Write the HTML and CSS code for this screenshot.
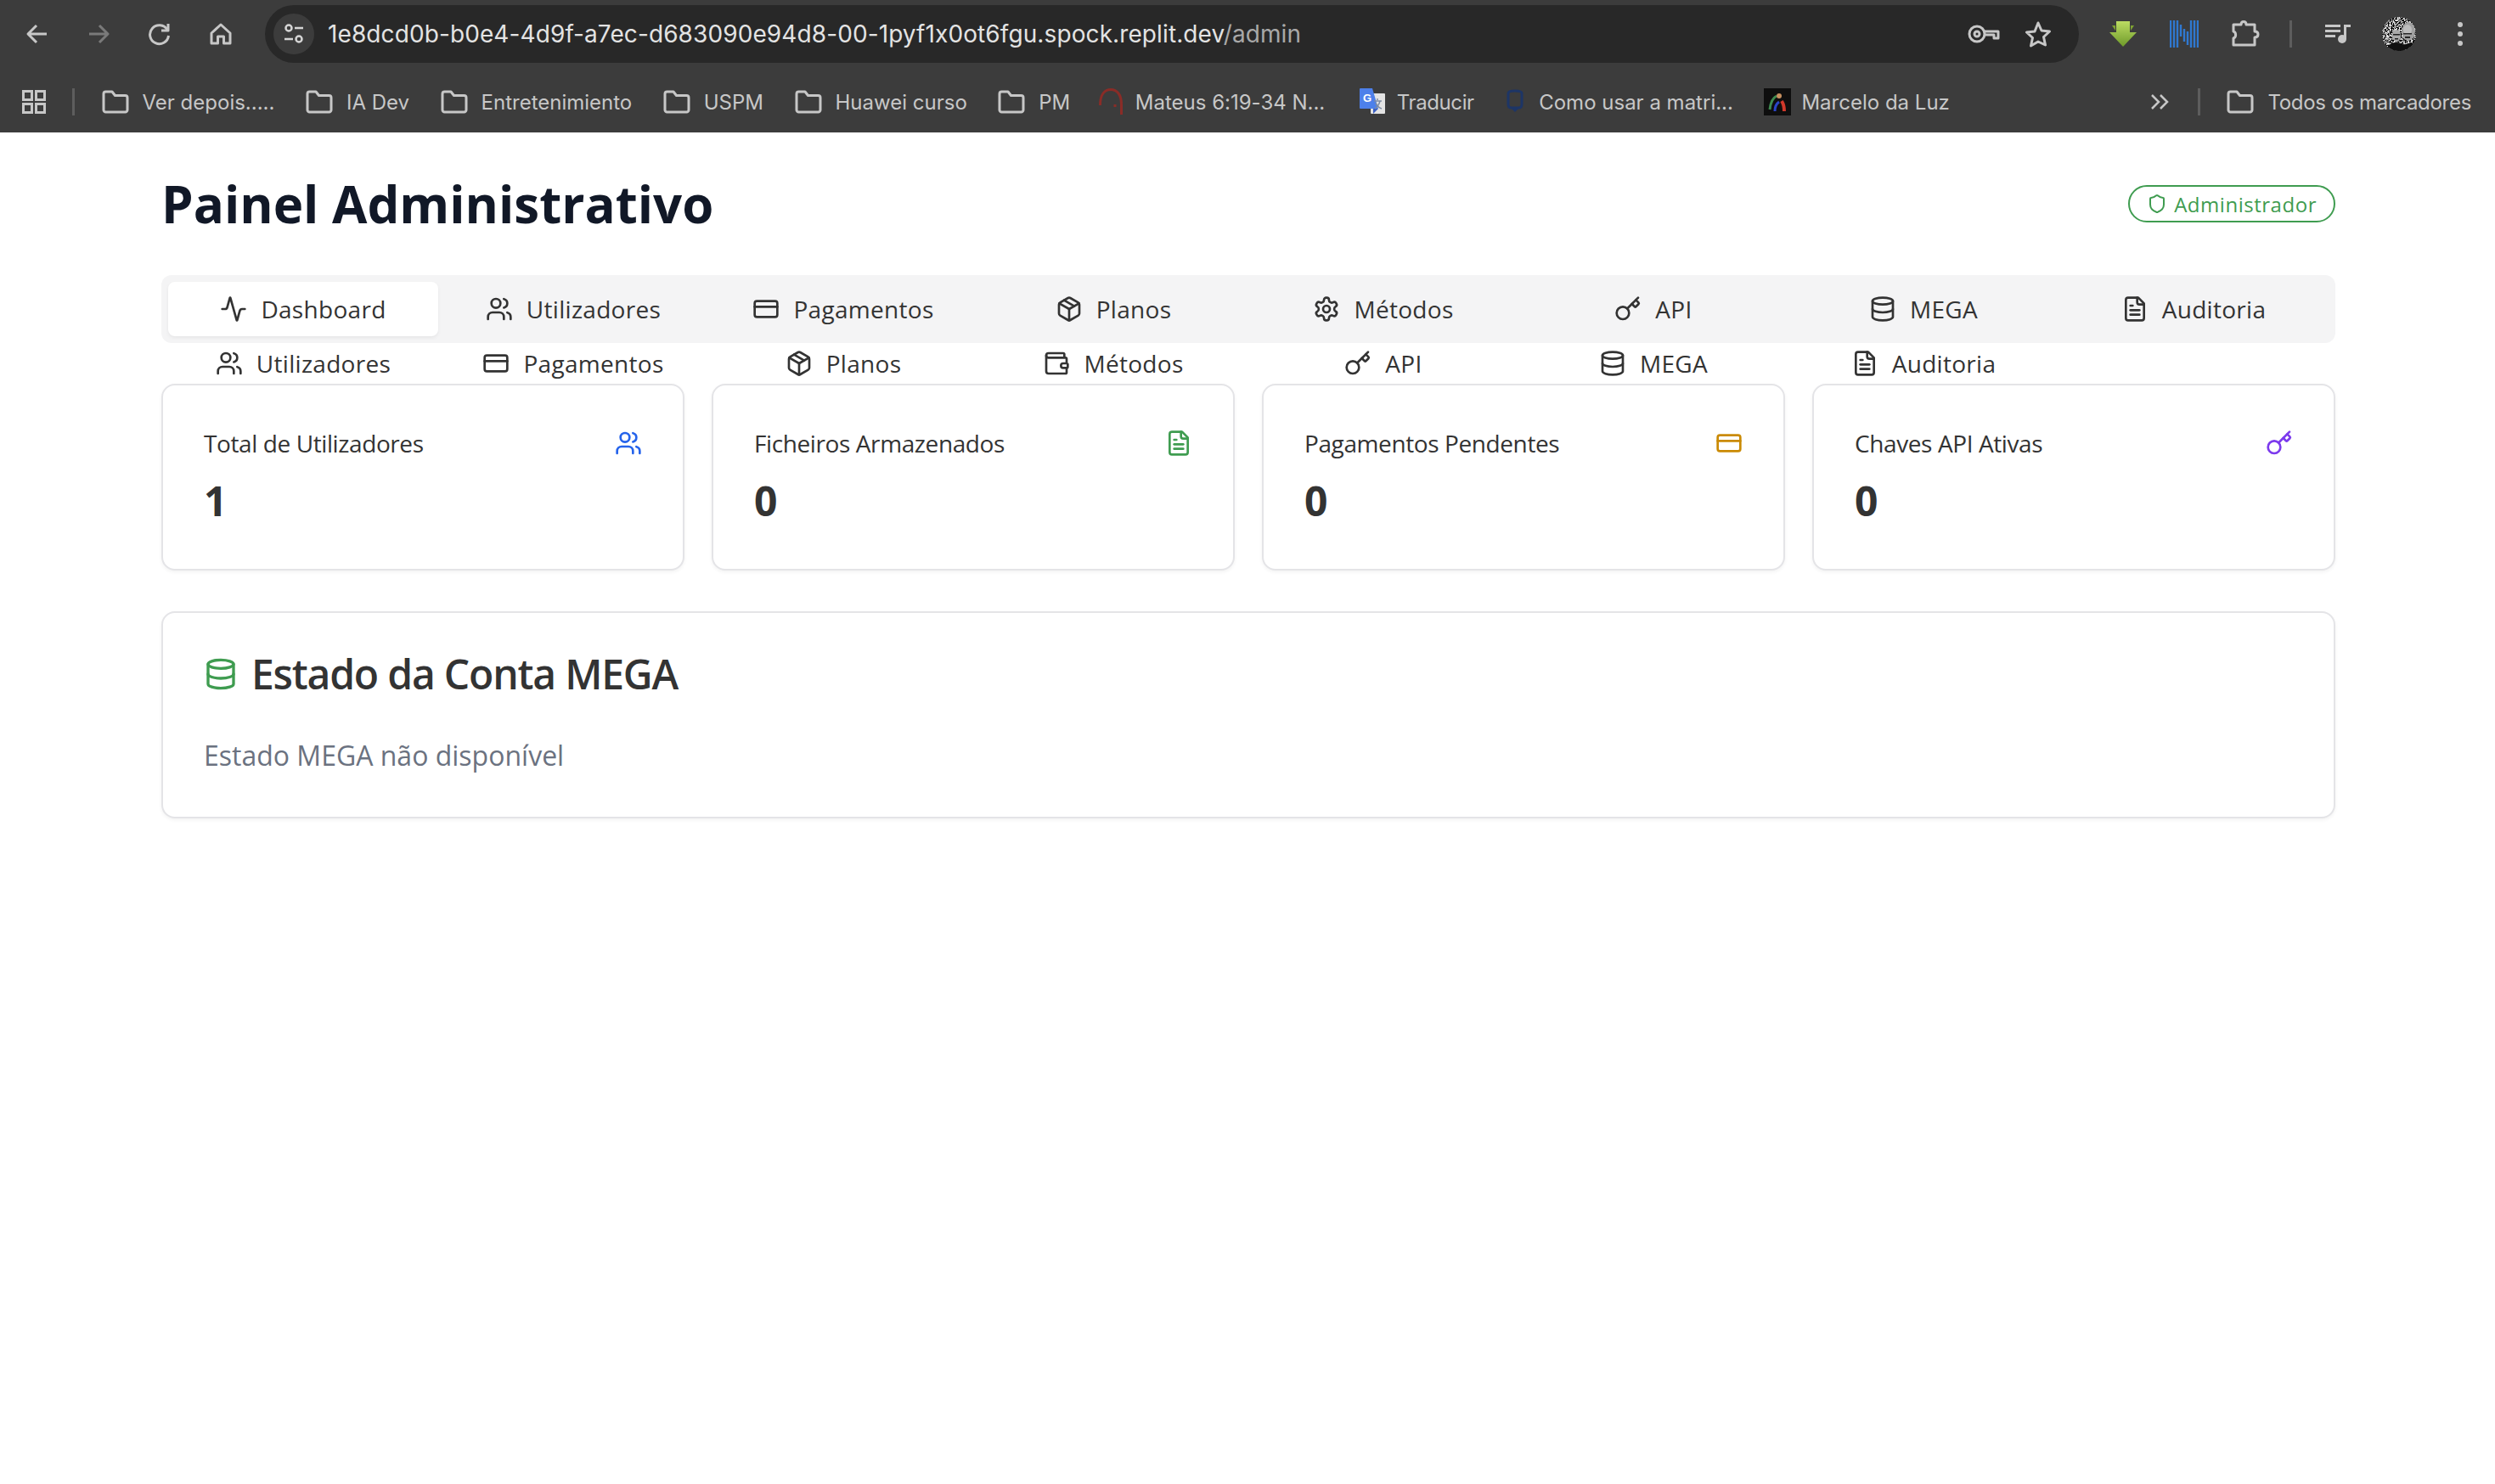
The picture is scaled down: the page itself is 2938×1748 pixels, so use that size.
FILE: index.html
```html
<!DOCTYPE html>
<html lang="pt">
<head>
<meta charset="utf-8">
<title>Painel Administrativo</title>
<link rel="stylesheet" href="styles.css">
</head>
<body>
<svg class="defs" width="0" height="0" aria-hidden="true">
  <defs>
    <linearGradient id="arrow-grad" x1="0" y1="0" x2="0" y2="1"><stop offset="0" stop-color="#bcdc62"/><stop offset="1" stop-color="#6e9a2a"/></linearGradient>
    <filter id="speckle" x="0" y="0" width="100%" height="100%"><feTurbulence type="fractalNoise" baseFrequency=".55" numOctaves="2" seed="7"/><feColorMatrix type="matrix" values="3 3 0 0 -2.750 3 3 0 0 -2.750 3 3 0 0 -2.750 0 0 0 0 1"/></filter>
  </defs>
  <symbol id="i-activity" viewBox="0 0 24 24"><path d="M22 12h-2.48a2 2 0 0 0-1.93 1.46l-2.35 8.36a.25.25 0 0 1-.48 0L9.24 2.18a.25.25 0 0 0-.48 0l-2.35 8.36A2 2 0 0 1 4.49 12H2"/></symbol>
  <symbol id="i-users" viewBox="0 0 24 24"><path d="M16 21v-2a4 4 0 0 0-4-4H6a4 4 0 0 0-4 4v2"/><circle cx="9" cy="7" r="4"/><path d="M22 21v-2a4 4 0 0 0-3-3.87"/><path d="M16 3.13a4 4 0 0 1 0 7.75"/></symbol>
  <symbol id="i-card" viewBox="0 0 24 24"><rect width="20" height="14" x="2" y="5" rx="2"/><line x1="2" x2="22" y1="10" y2="10"/></symbol>
  <symbol id="i-package" viewBox="0 0 24 24"><path d="M11 21.73a2 2 0 0 0 2 0l7-4A2 2 0 0 0 21 16V8a2 2 0 0 0-1-1.73l-7-4a2 2 0 0 0-2 0l-7 4A2 2 0 0 0 3 8v8a2 2 0 0 0 1 1.73z"/><path d="M12 22V12"/><polyline points="3.29 7 12 12 20.71 7"/><path d="m7.5 4.27 9 5.15"/></symbol>
  <symbol id="i-settings" viewBox="0 0 24 24"><path d="M12.22 2h-.44a2 2 0 0 0-2 2v.18a2 2 0 0 1-1 1.73l-.43.25a2 2 0 0 1-2 0l-.15-.08a2 2 0 0 0-2.73.73l-.22.38a2 2 0 0 0 .73 2.73l.15.1a2 2 0 0 1 1 1.72v.51a2 2 0 0 1-1 1.74l-.15.09a2 2 0 0 0-.73 2.73l.22.38a2 2 0 0 0 2.73.73l.15-.08a2 2 0 0 1 2 0l.43.25a2 2 0 0 1 1 1.73V20a2 2 0 0 0 2 2h.44a2 2 0 0 0 2-2v-.18a2 2 0 0 1 1-1.73l.43-.25a2 2 0 0 1 2 0l.15.08a2 2 0 0 0 2.73-.73l.22-.39a2 2 0 0 0-.73-2.73l-.15-.08a2 2 0 0 1-1-1.74v-.5a2 2 0 0 1 1-1.74l.15-.09a2 2 0 0 0 .73-2.73l-.22-.38a2 2 0 0 0-2.73-.73l-.15.08a2 2 0 0 1-2 0l-.43-.25a2 2 0 0 1-1-1.73V4a2 2 0 0 0-2-2z"/><circle cx="12" cy="12" r="3"/></symbol>
  <symbol id="i-key" viewBox="0 0 24 24"><path d="m15.5 7.5 2.3 2.3a1 1 0 0 0 1.4 0l2.1-2.1a1 1 0 0 0 0-1.4L19 4"/><path d="m21 2-9.6 9.6"/><circle cx="7.5" cy="15.5" r="5.5"/></symbol>
  <symbol id="i-db" viewBox="0 0 24 24"><ellipse cx="12" cy="5" rx="9" ry="3"/><path d="M3 5V19A9 3 0 0 0 21 19V5"/><path d="M3 12A9 3 0 0 0 21 12"/></symbol>
  <symbol id="i-file" viewBox="0 0 24 24"><path d="M15 2H6a2 2 0 0 0-2 2v16a2 2 0 0 0 2 2h12a2 2 0 0 0 2-2V7Z"/><path d="M14 2v4a2 2 0 0 0 2 2h4"/><path d="M10 9H8"/><path d="M16 13H8"/><path d="M16 17H8"/></symbol>
  <symbol id="i-wallet" viewBox="0 0 24 24"><path d="M19 7V4a1 1 0 0 0-1-1H5a2 2 0 0 0 0 4h15a1 1 0 0 1 1 1v4h-3a2 2 0 0 0 0 4h3a1 1 0 0 0 1-1v-2a1 1 0 0 0-1-1"/><path d="M3 5v14a2 2 0 0 0 2 2h15a1 1 0 0 0 1-1v-4"/></symbol>
  <symbol id="i-shield" viewBox="0 0 24 24"><path d="M20 13c0 5-3.500 7.500-7.660 8.950a1 1 0 0 1-.67-.01C7.500 20.500 4 18 4 13V6a1 1 0 0 1 1-1c2 0 4.500-1.200 6.240-2.720a1.170 1.170 0 0 1 1.520 0C14.510 3.810 17 5 19 5a1 1 0 0 1 1 1z"/></symbol>
  <symbol id="c-folder" viewBox="0 0 32 28"><path d="M2 4.5A2.5 2.5 0 0 1 4.500 2h7.500l3.500 4.500h12A2.500 2.500 0 0 1 30 9v14.500a2.500 2.500 0 0 1-2.500 2.500h-23A2.500 2.500 0 0 1 2 23.500z"/></symbol>
</svg>

<header class="browser">
  <div class="toolbar">
    <div class="nav">
      <span class="tool"><svg class="cico" width="28" height="28" viewBox="0 0 28 28"><path d="M25 14H4M13 4 3 14l10 10"/></svg></span>
      <span class="tool dim"><svg class="cico" width="28" height="28" viewBox="0 0 28 28"><path d="M3 14h21M15 4l10 10-10 10"/></svg></span>
      <span class="tool"><svg class="cico" width="28" height="28" viewBox="0 0 28 28"><path d="M23 9a11 11 0 1 0 1.500 7"/><path d="M24 2v8h-8"/></svg></span>
      <span class="tool"><svg class="cico" width="28" height="28" viewBox="0 0 28 28"><path d="M3 13 14 3l11 10v12h-7.500v-8h-7v8H3z"/></svg></span>
    </div>
    <div class="omnibox">
      <span class="siteinfo"><svg class="cico thin" width="26" height="26" viewBox="0 0 26 26"><circle cx="7" cy="6" r="3.500"/><path d="M14 6h10M2 19h10"/><circle cx="19" cy="19" r="3.500"/></svg></span>
      <span class="url">1e8dcd0b-b0e4-4d9f-a7ec-d683090e94d8-00-1pyf1x0ot6fgu.spock.replit.dev<span class="path">/admin</span></span>
      <span class="omni-tool"><svg class="cico" width="38" height="24" viewBox="0 0 38 24"><circle cx="11" cy="12" r="9"/><circle cx="11" cy="12" r="3"/><path d="M20 9h16v8h-5v-4h-11"/></svg></span>
      <span class="omni-tool"><svg class="cico" width="32" height="32" viewBox="0 0 32 32"><path d="m16 3 4 9 9.500 1-7 6.500 2 9.500L16 25l-8.500 5 2-9.500-7-6.500 9.500-1z"/></svg></span>
    </div>
    <div class="ext">
      <span class="tool"><svg width="32" height="30" viewBox="0 0 32 30"><path class="arrow-dk" d="M7 5 3 5l4 6zM25 5h4l-4 6z"/><path class="arrow" d="M8 0h16v13h8L16 30 0 13h8z"/></svg></span>
      <span class="tool"><svg class="nlogo" width="34" height="32" viewBox="0 0 34 32"><path d="M1 0v32M5 0v32M9 0v32M13 5v14M17 10v15M21 13v16M25 0v32M29 0v32M33 0v32"/></svg></span>
      <span class="tool"><svg class="cico ext-puzzle" width="34" height="32" viewBox="0 0 34 32"><path d="M3 5h9c0-2.500 1.500-3.500 3-3.500s3 1 3 3.500h10v8c2.500 0 4 1.500 4 3.500s-1.500 3.500-4 3.500v9H3v-8c3.500-1 3.500-7 0-8z"/></svg></span>
      <span class="ext-sep"></span>
      <span class="tool"><svg width="30" height="22" viewBox="0 0 30 22"><path class="music" d="M0 0h18v3H0zM0 6h18v3H0zM0 12h12v3H0zM22 0h8v3h-5v14h-3z"/><circle class="music" cx="20" cy="17" r="5"/></svg></span>
      <span class="tool"><svg width="40" height="40" viewBox="0 0 40 40"><defs><clipPath id="av"><circle cx="20" cy="20" r="20"/></clipPath></defs><g clip-path="url(#av)"><rect width="40" height="40" filter="url(#speckle)"/><ellipse cx="31" cy="17" rx="8" ry="11" fill="#a0a0a0"/><ellipse cx="30" cy="15" rx="5" ry="6" fill="#bdbdbd"/><path fill="#262626" d="M25 19h10v1.500H25zM27 23h6v2h-6z"/><ellipse cx="17" cy="22" rx="5" ry="7" fill="#aaa"/><path fill="#222" d="M13 20h8v1.500h-8zM15 25h4v1.500h-4z"/><path fill="#101010" d="M6 40c0-7 5-10 10-10s8 2 10 3c3-2 8-3 14-2v9z"/></g></svg></span>
      <span class="tool"><svg width="8" height="30" viewBox="0 0 8 30"><circle class="music" cx="4" cy="4" r="3"/><circle class="music" cx="4" cy="15" r="3"/><circle class="music" cx="4" cy="26" r="3"/></svg></span>
    </div>
  </div>
  <nav class="bookmarks">
    <svg class="apps" width="28" height="28" viewBox="0 0 28 28"><path d="M1.500 1.500h10v10h-10zM16.500 1.500h10v10h-10zM1.500 16.500h10v10h-10zM16.500 16.500h10v10h-10z"/></svg>
    <span class="bm-sep"></span>
    <a class="bm"><svg class="folder" width="32" height="28"><use href="#c-folder"/></svg><span>Ver depois.....</span></a>
    <a class="bm"><svg class="folder" width="32" height="28"><use href="#c-folder"/></svg><span>IA Dev</span></a>
    <a class="bm"><svg class="folder" width="32" height="28"><use href="#c-folder"/></svg><span>Entretenimiento</span></a>
    <a class="bm"><svg class="folder" width="32" height="28"><use href="#c-folder"/></svg><span>USPM</span></a>
    <a class="bm"><svg class="folder" width="32" height="28"><use href="#c-folder"/></svg><span>Huawei curso</span></a>
    <a class="bm"><svg class="folder" width="32" height="28"><use href="#c-folder"/></svg><span>PM</span></a>
    <a class="bm fav tight"><svg width="32" height="32" viewBox="0 0 32 32"><path class="fav-red" d="M2.500 20C2.500 7 8 1.500 15 1.500S27.500 7 27.500 19v12"/><path class="fav-red" d="M20 19v3"/></svg><span>Mateus 6:19-34 N...</span></a>
    <a class="bm fav loose"><svg width="32" height="32" viewBox="0 0 32 32"><rect x="13" y="6" width="17" height="24" rx="1" fill="#e4e4e4"/><path fill="#4d80ea" d="M1 0h14l7 24H1a1 1 0 0 1-1-1V1a1 1 0 0 1 1-1z"/><path fill="#3a5fc4" d="M16 24h6l-6 6z"/><text class="fav-g" x="4" y="16">G</text><path fill="none" stroke="#7d8ba3" stroke-width="1.500" d="M21 12v2M17 15h9M24 15c-1 4-3 7-6 9M19 17c1 3 4 6 7 7"/></svg><span class="narrow">Traducir</span></a>
    <a class="bm fav tight"><svg width="32" height="32" viewBox="0 0 32 32"><path class="fav-blue" d="M8 6c0-2 3-3 8-3s8 1 8 3v13c0 3-2 4-4 4h-8c-2 0-4-1-4-4z"/><path class="fav-blue-fill" d="M12 24h8l-4 4z"/></svg><span>Como usar a matri...</span></a>
    <a class="bm fav"><svg width="32" height="32" viewBox="0 0 32 32"><rect width="32" height="32" fill="#0e0e0e"/><path fill="none" stroke="#3f8a4f" stroke-width="3" d="M7 25C8 16 11 11 15 9"/><path fill="none" stroke="#2a45c8" stroke-width="3" d="M13 27c0-6 2-9 5-11"/><path fill="none" stroke="#d0392b" stroke-width="4" d="M24 27c0-6-1-9-3-12"/><circle cx="18" cy="9" r="3" fill="#c89060"/></svg><span>Marcelo da Luz</span></a>
    <svg class="more" width="22" height="20" viewBox="0 0 22 20"><path d="m2 2 8 8-8 8M12 2l8 8-8 8"/></svg>
    <span class="bm-sep end"></span>
    <a class="bm all"><svg class="folder" width="32" height="28"><use href="#c-folder"/></svg><span>Todos os marcadores</span></a>
  </nav>
</header>

<main class="page">
  <div class="title-row">
    <h1>Painel Administrativo</h1>
    <span class="badge"><svg class="ico ico-sm"><use href="#i-shield"/></svg>Administrador</span>
  </div>

  <div class="tabs">
    <button class="tab active"><svg class="ico"><use href="#i-activity"/></svg>Dashboard</button>
    <button class="tab"><svg class="ico"><use href="#i-users"/></svg>Utilizadores</button>
    <button class="tab"><svg class="ico"><use href="#i-card"/></svg>Pagamentos</button>
    <button class="tab"><svg class="ico"><use href="#i-package"/></svg>Planos</button>
    <button class="tab"><svg class="ico"><use href="#i-settings"/></svg>Métodos</button>
    <button class="tab"><svg class="ico"><use href="#i-key"/></svg>API</button>
    <button class="tab"><svg class="ico"><use href="#i-db"/></svg>MEGA</button>
    <button class="tab"><svg class="ico"><use href="#i-file"/></svg>Auditoria</button>
    <button class="tab"><svg class="ico"><use href="#i-users"/></svg>Utilizadores</button>
    <button class="tab"><svg class="ico"><use href="#i-card"/></svg>Pagamentos</button>
    <button class="tab"><svg class="ico"><use href="#i-package"/></svg>Planos</button>
    <button class="tab"><svg class="ico"><use href="#i-wallet"/></svg>Métodos</button>
    <button class="tab"><svg class="ico"><use href="#i-key"/></svg>API</button>
    <button class="tab"><svg class="ico"><use href="#i-db"/></svg>MEGA</button>
    <button class="tab"><svg class="ico"><use href="#i-file"/></svg>Auditoria</button>
  </div>

  <section class="stats">
    <article class="card stat">
      <div class="stat-head"><h3>Total de Utilizadores</h3><svg class="ico blue"><use href="#i-users"/></svg></div>
      <div class="stat-value">1</div>
    </article>
    <article class="card stat">
      <div class="stat-head"><h3>Ficheiros Armazenados</h3><svg class="ico green"><use href="#i-file"/></svg></div>
      <div class="stat-value">0</div>
    </article>
    <article class="card stat">
      <div class="stat-head"><h3>Pagamentos Pendentes</h3><svg class="ico yellow"><use href="#i-card"/></svg></div>
      <div class="stat-value">0</div>
    </article>
    <article class="card stat">
      <div class="stat-head"><h3>Chaves API Ativas</h3><svg class="ico purple"><use href="#i-key"/></svg></div>
      <div class="stat-value">0</div>
    </article>
  </section>

  <section class="card mega">
    <h2><svg class="ico ico-lg green"><use href="#i-db"/></svg>Estado da Conta MEGA</h2>
    <p>Estado MEGA não disponível</p>
  </section>
</main>
</body>
</html>
```

FILE: styles.css
```css
* { box-sizing: border-box; }
html, body { margin: 0; padding: 0; background: #fff; }
body { font-family: "Open Sans", "Liberation Sans", sans-serif; color: #333; min-height: 1748px; overflow: hidden; }
.defs { position: absolute; }

/* browser chrome */
.browser { height: 156px; background: #3c3c3c; display: flex; flex-direction: column; font-family: Inter, "Liberation Sans", sans-serif; font-feature-settings: "calt" 0; }
.toolbar { height: 86px; display: flex; align-items: flex-start; padding: 6px 5px 0 8px; }
.nav, .ext { display: flex; align-items: center; height: 68px; flex: none; }
.ext { margin-left: 16px; }
.tool { width: 72px; height: 68px; display: flex; align-items: center; justify-content: center; flex: none; }
.tool.dim { opacity: .45; }
.cico { fill: none; stroke: #c7c7c7; stroke-width: 3; stroke-linejoin: round; }
.cico.thin { stroke: #d5d5d5; stroke-width: 2.500; }
.omnibox { flex: 1; margin-left: 16px; height: 68px; background: #282828; border-radius: 34px; display: flex; align-items: center; padding: 0 16px 0 10px; }
.siteinfo { width: 48px; height: 48px; border-radius: 50%; background: #3c3c3c; display: flex; align-items: center; justify-content: center; flex: none; }
.url { flex: 1; margin-left: 16px; font-size: 28px; letter-spacing: .1px; color: #e3e3e3; white-space: nowrap; }
.path { color: #a8a8a8; }
.omni-tool { width: 64px; height: 68px; display: flex; align-items: center; justify-content: center; flex: none; }
.arrow { fill: url(#arrow-grad); }
.arrow-dk { fill: #7fa233; }
.nlogo { fill: none; stroke: #2f78d0; stroke-width: 2.400; }
.ext-sep { width: 3px; height: 32px; background: #5d5d5d; margin: 0 18px 0 16px; flex: none; }
.music { fill: #c7c7c7; }
.bookmarks { height: 68px; display: flex; align-items: center; padding: 0 28px 0 26px; gap: 36.500px; }
.apps { fill: none; stroke: #c7c7c7; stroke-width: 3; flex: none; }
.bm-sep { width: 3px; height: 32px; background: #5d5d5d; margin: 0 -5px 0 -5.500px; flex: none; }
.bm { display: flex; align-items: center; gap: 16px; color: #c7c7c7; font-size: 24px; white-space: nowrap; flex: none; }
.bm.fav { gap: 12px; }
.bm.tight { margin-left: -4px; }
.bm.loose { margin-left: 4px; }
.bm .narrow { letter-spacing: -.4px; }
.bm.all span { letter-spacing: -.3px; }
.bm svg { flex: none; }
.folder { fill: none; stroke: #c7c7c7; stroke-width: 3; stroke-linejoin: round; }
.fav-red { fill: none; stroke: #8a2c27; stroke-width: 3; }
.fav-blue { fill: none; stroke: #1d3566; stroke-width: 3; }
.fav-blue-fill { fill: #1d3566; }
.fav-g { fill: #fff; font: 700 13px "Liberation Sans", sans-serif; }
.more { fill: none; stroke: #c7c7c7; stroke-width: 2.500; margin-left: auto; flex: none; }
.bm-sep.end { margin: 0 -5.500px 0 -2.500px; }

/* page */
.page { width: 2560px; margin-left: 190px; padding-top: 48px; }
.title-row { display: flex; align-items: center; justify-content: space-between; margin-bottom: 48px; }
h1 { margin: 0; font-size: 60px; line-height: 72px; font-weight: 700; color: #111827; }
.ico { width: 32px; height: 32px; flex: none; fill: none; stroke: currentColor; stroke-width: 2; stroke-linecap: round; stroke-linejoin: round; }
.ico-sm { width: 24px; height: 24px; margin-right: 8px; }
.ico-lg { width: 40px; height: 40px; }
.badge { display: inline-flex; align-items: center; height: 44px; padding: 0 20px; border: 2px solid #3f9c50; border-radius: 22px; color: #3f9c50; font-size: 24px; font-weight: 500; letter-spacing: .53px; }

.tabs { height: 80px; padding: 8px; background: #f4f4f5; border-radius: 12px; display: grid; grid-template-columns: repeat(8, 1fr); grid-auto-rows: 64px; }
.tab { display: flex; align-items: center; justify-content: center; gap: 16px; border: 0; background: transparent; padding: 0; border-radius: 8px; font: 500 28px "Open Sans", sans-serif; letter-spacing: .3px; color: #333; }
.tab.active { background: #fff; box-shadow: 0 2px 4px rgba(0, 0, 0, .06); }

.card { background: #fff; border: 2px solid #e4e4e7; border-radius: 16px; box-shadow: 0 2px 4px rgba(0, 0, 0, .05); padding: 48px; }
.stats { display: grid; grid-template-columns: repeat(4, 1fr); gap: 32px; margin-top: 48px; position: relative; }
.stat-head { display: flex; align-items: center; justify-content: space-between; height: 40px; margin-bottom: 16px; }
.stat-head h3 { margin: 0; font-size: 28px; line-height: 40px; font-weight: 500; letter-spacing: -.4px; color: #333; }
.stat-value { font-size: 48px; line-height: 64px; font-weight: 700; color: #333; }
.blue { color: #2563eb; }
.green { color: #3f9c50; }
.yellow { color: #ca8a04; }
.purple { color: #7c3aed; }

.mega { margin-top: 48px; }
.mega h2 { margin: 0 0 48px; display: flex; align-items: center; gap: 16px; font-size: 48px; line-height: 48px; font-weight: 600; letter-spacing: -.025em; color: #333; }
.mega p { margin: 0; font-size: 32px; line-height: 48px; color: #6b7280; }
```
